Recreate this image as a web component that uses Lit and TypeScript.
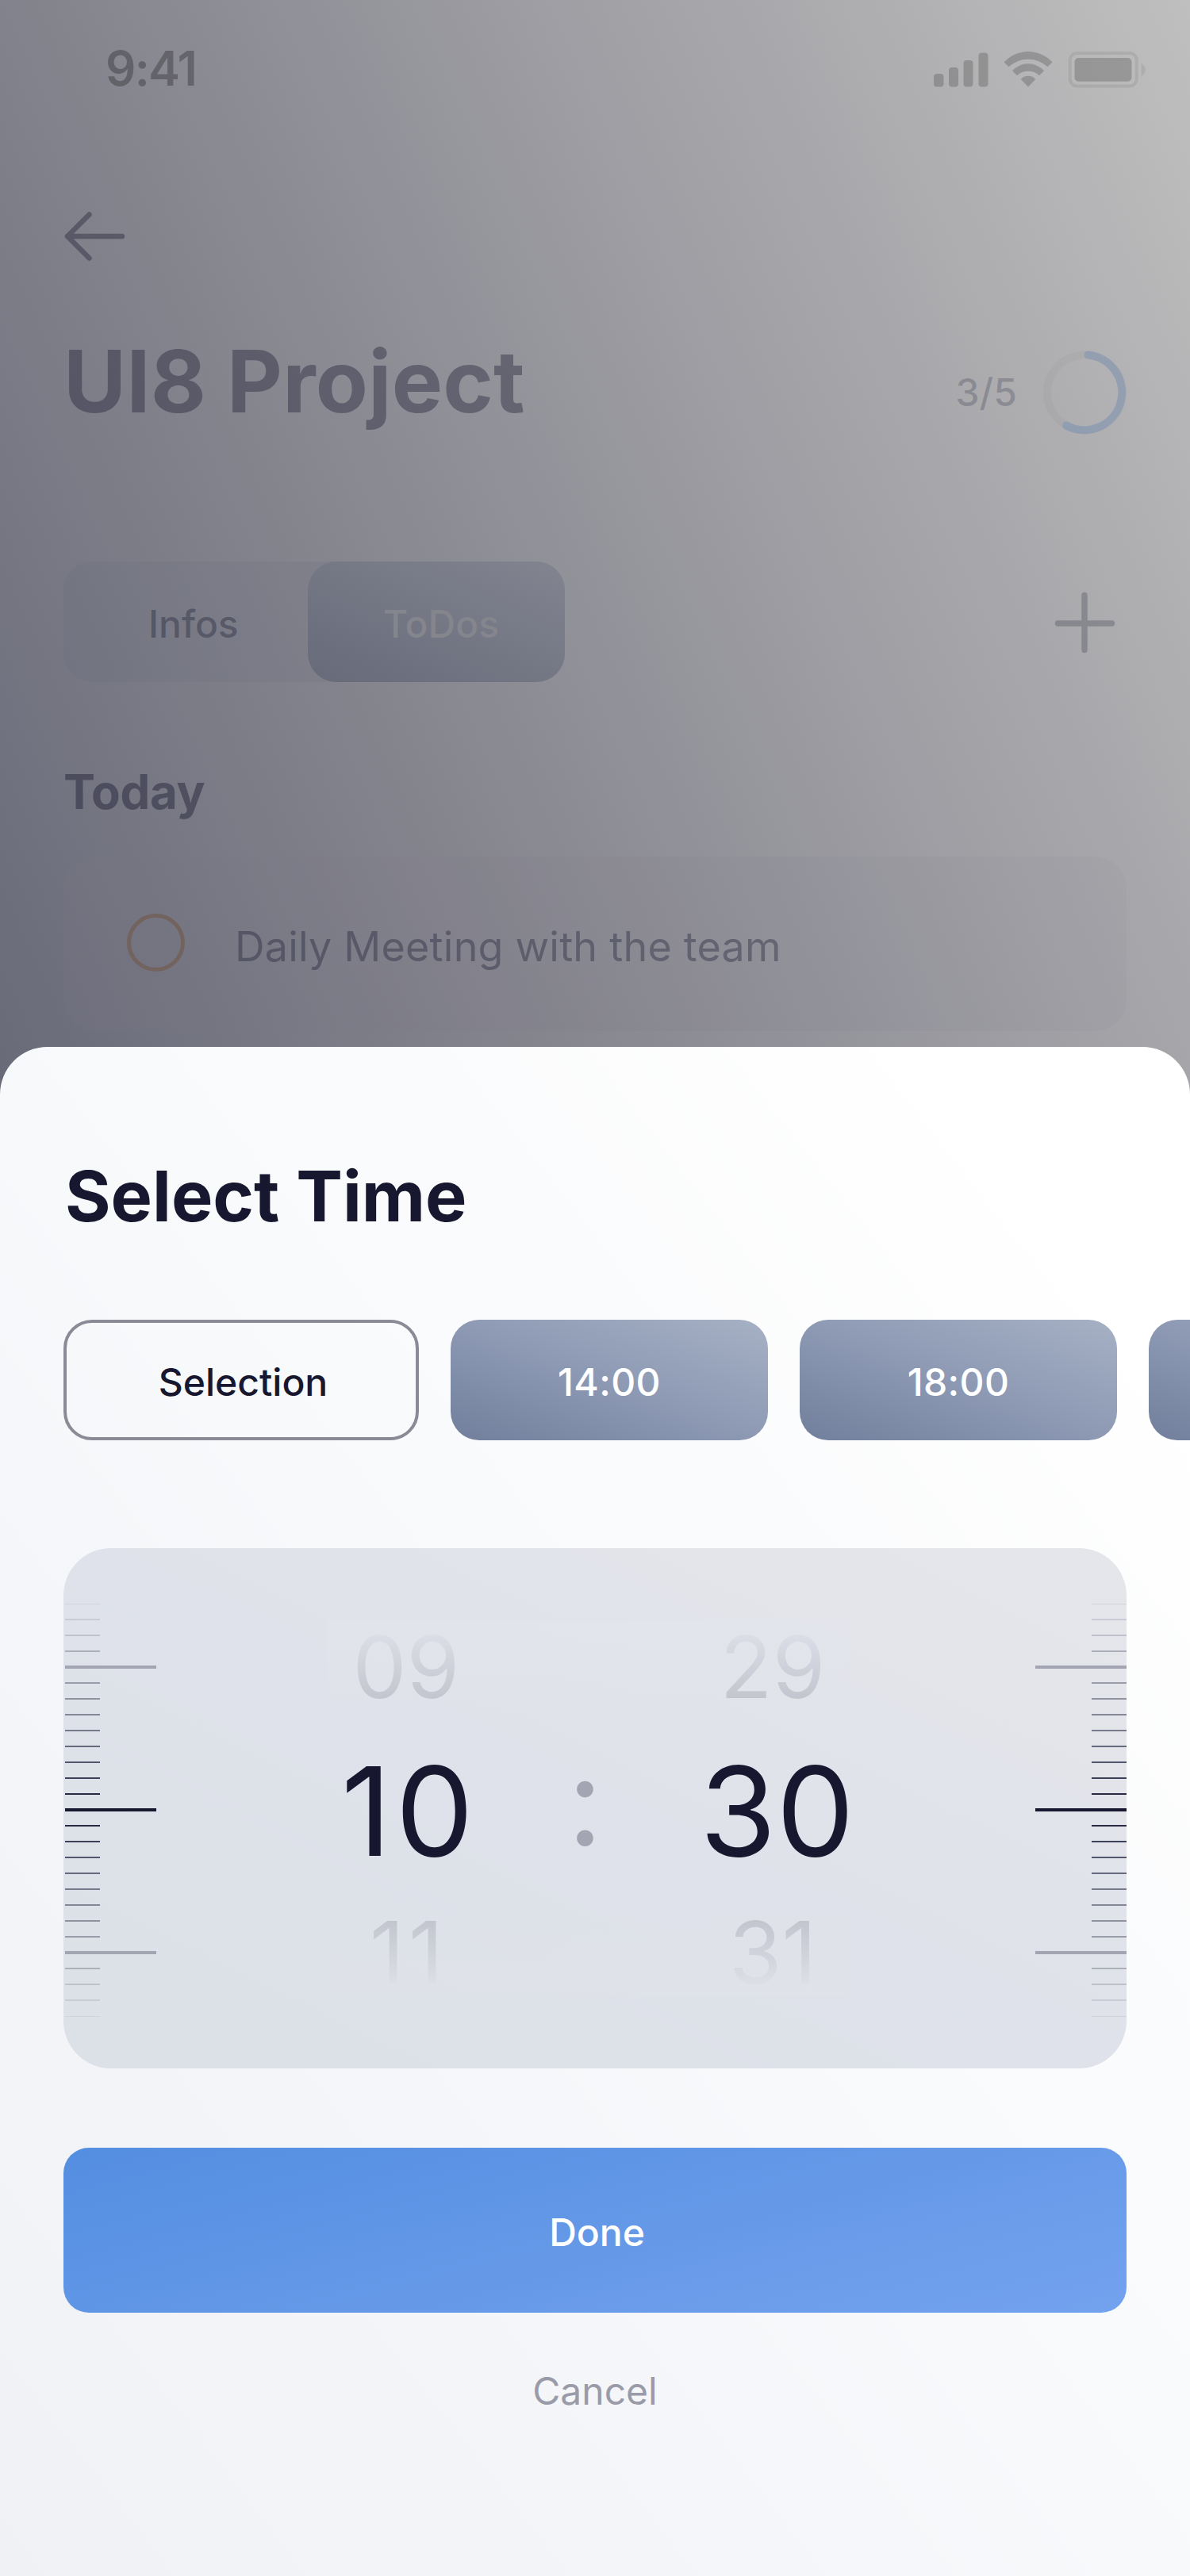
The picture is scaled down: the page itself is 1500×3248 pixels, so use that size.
import { LitElement, html, css, svg } from "lit";
import { customElement, property } from "lit/decorators.js";

const arrowIcon = svg`<path d="M154 298H85M112.500 270.500L85 298L112.500 325.500" transform="translate(-80 -264)"/>`;

@customElement("status-bar")
class StatusBar extends LitElement {
  static styles = css`
    :host { display: flex; justify-content: space-between; align-items: flex-start; height: 264px; box-sizing: border-box; padding: 50px 54px 0 133px; }
    .clock { font-size: 60px; line-height: 73px; font-weight: 600; color: rgba(0, 0, 0, 0.27); letter-spacing: -1.7px; }
    svg { display: block; margin-top: 13px; }
    .solid { fill: rgba(0, 0, 0, 0.185); }
    .faint { fill: rgba(0, 0, 0, 0.07); }
    .shell { fill: none; stroke: rgba(0, 0, 0, 0.07); stroke-width: 4; }
  `;
  render() {
    return html`
      <div class="clock">9:41</div>
      <svg width="270" height="50" viewBox="1176 63 270 50">
        <g class="solid">
          <rect x="1177" y="93" width="12.500" height="16.500" rx="4" />
          <rect x="1196" y="85" width="12" height="24.500" rx="4" />
          <rect x="1214.500" y="76" width="12" height="33.500" rx="4" />
          <rect x="1233.500" y="66.500" width="12" height="43" rx="4" />
          <path d="M1265.500 78.500A41.200 41.200 0 0 1 1326.500 78.500L1320.500 84.300A36 36 0 0 0 1271.500 84.300Z" />
          <path d="M1276 89.300A26.700 26.700 0 0 1 1316 89.300L1310 95.200A20.600 20.600 0 0 0 1282 95.200Z" />
          <path d="M1286.700 100A12.200 12.200 0 0 1 1305.300 100L1296 109.500Z" />
          <rect x="1354.500" y="73" width="72" height="29.700" rx="5" />
        </g>
        <rect class="shell" x="1348.700" y="67" width="84" height="41.500" rx="9" />
        <path class="faint" d="M1438.500 80C1445.500 83 1445.500 93 1438.500 96Z" />
      </svg>
    `;
  }
}

@customElement("project-screen")
class ProjectScreen extends LitElement {
  static styles = css`
    :host { display: block; height: 1320px; }
    .stroke { fill: none; stroke-linecap: round; stroke-linejoin: round; }
    .back { display: block; margin-left: 80px; stroke: rgba(23, 24, 47, 0.38); stroke-width: 6.500; }
    .heading { display: flex; align-items: flex-start; padding: 82px 80px 0 80px; height: 376px; box-sizing: border-box; }
    h1 { margin: 1px 0 0; font-size: 108px; line-height: 131px; font-weight: 700; letter-spacing: 0.2px; color: rgba(23, 24, 47, 0.38); }
    .count { margin: 52px 33px 0 auto; font-size: 48px; line-height: 58px; font-weight: 500; color: rgba(23, 24, 47, 0.22); }
    .ring { display: block; margin-top: 28px; }
    .track { fill: none; stroke: rgba(0, 0, 0, 0.025); stroke-width: 10; }
    .arc { fill: none; stroke: rgba(120, 145, 180, 0.48); stroke-width: 10; stroke-linecap: round; }
    .toolbar { display: flex; align-items: center; justify-content: space-between; padding: 0 93px 0 80px; }
    .tabs { display: flex; width: 632px; height: 152px; border-radius: 36px; background: rgba(95, 98, 118, 0.13); font-size: 48px; line-height: 58px; font-weight: 500; color: rgba(23, 24, 47, 0.36); }
    .tab { width: 308px; box-sizing: border-box; padding: 50px 0 0 107px; }
    .tab.active { width: 324px; border-radius: 36px; padding-left: 95px; background: linear-gradient(to top right, #676a79, #828490); color: #85858d; }
    .plus { stroke: rgba(23, 24, 47, 0.24); stroke-width: 7.500; }
    h2 { margin: 102px 80px 0; font-size: 60px; line-height: 73px; font-weight: 700; letter-spacing: -0.3px; color: rgba(23, 24, 47, 0.43); }
    .task { display: flex; margin: 45px 80px 0; height: 220px; border-radius: 40px; background: linear-gradient(90deg, rgba(122, 116, 132, 0.14), rgba(122, 118, 134, 0.08)); }
    .check { width: 73px; height: 73px; box-sizing: border-box; border: 5px solid #72635e; border-radius: 50%; margin: 72px 0 0 80px; }
    .label { margin: 82px 0 0 63px; font-size: 52px; line-height: 63px; letter-spacing: 0.22px; color: rgba(23, 24, 47, 0.36); }
  `;
  render() {
    return html`
      <status-bar></status-bar>
      <svg class="back stroke" width="80" height="68">${arrowIcon}</svg>
      <div class="heading">
        <h1>UI8 Project</h1>
        <div class="count">3/5</div>
        <svg class="ring" width="105" height="106" viewBox="0 0 105 106">
          <circle class="track" cx="52.500" cy="53" r="47.500" />
          <path class="arc" d="M56.500 5.500A47.500 47.500 0 1 1 29 94.500" />
        </svg>
      </div>
      <div class="toolbar">
        <div class="tabs">
          <div class="tab">Infos</div>
          <div class="tab active">ToDos</div>
        </div>
        <svg class="plus stroke" width="80" height="80"><path d="M40 6.500V75.500M6.500 42H74.500" /></svg>
      </div>
      <h2>Today</h2>
      <div class="task">
        <span class="check"></span>
        <span class="label">Daily Meeting with the team</span>
      </div>
    `;
  }
}

const TICK_COLORS = ["#d0d3dc", "#c9ccd6", "#bfc2cc", "#abafb9", "#a3a5b2", "#999ca9", "#8f93a0", "#838798", "#777a8c", "#666a7e", "#52566d", "#3d4059", "#2a2a44", "#17182f"];

@customElement("tick-scale")
class TickScale extends LitElement {
  @property({ type: Boolean, reflect: true }) mirrored = false;
  static styles = css`
    :host { display: flex; flex-direction: column; width: 115px; margin: 60px 0 0 2px; align-items: flex-start; }
    :host([mirrored]) { align-items: flex-end; margin-left: auto; }
    .slot { height: 20px; width: 44px; display: flex; align-items: center; }
    .slot.major { width: 115px; }
    .line { width: 100%; height: 2px; }
    .major .line { height: 4px; }
    .edge .line { height: 1px; }
  `;
  render() {
    return Array.from({ length: 27 }, (_, i) => {
      const kind = [4, 13, 22].includes(i) ? "major" : i % 26 === 0 ? "edge" : "";
      const color = TICK_COLORS[i <= 13 ? i : 26 - i];
      return html`<div class="slot ${kind}"><div class="line" style="background:${color}"></div></div>`;
    });
  }
}

@customElement("time-picker")
class TimePicker extends LitElement {
  static styles = css`
    :host { display: flex; height: 656px; margin: 136px 80px 0; border-radius: 60px; overflow: hidden; background: linear-gradient(to top right, #dce0e7, #dfe2ea 50%, #e5e6ea); }
    .wheel { display: grid; grid-template-columns: 200px 249px 206px; grid-template-rows: 116px 248px 108px; margin: 91px 0 0 216px; text-align: center; color: #17182f; }
    .wheel > * { display: flex; align-items: center; justify-content: center; box-sizing: border-box; }
    .side { font-size: 108px; color: transparent; background-clip: text, border-box; -webkit-background-clip: text, border-box; }
    .before { background-image: linear-gradient(to bottom, #dfe2ea 5%, #c1c3cd 90%), linear-gradient(to bottom, rgba(226, 229, 235, 0.6), rgba(224, 227, 235, 0.1)); }
    .after { background-image: linear-gradient(to top, #dfe2ea 5%, #c1c3cd 90%), linear-gradient(to top, rgba(224, 227, 232, 0.5), rgba(222, 225, 233, 0.1)); }
    .now { font-size: 156px; }
    .colon { font-size: 156px; color: #a3a5b2; padding-bottom: 26px; }
    .h09 { padding-right: 2px; }
    .h10 { padding-left: 6px; letter-spacing: 5px; }
    .h11 { padding-left: 4px; letter-spacing: 5px; }
    .m29, .m31 { padding-left: 18px; }
    .m30 { padding-left: 29px; }
  `;
  render() {
    return html`
      <tick-scale></tick-scale>
      <div class="wheel">
        <span class="side before h09">09</span><span class="side before"></span><span class="side before m29">29</span>
        <span class="now h10">10</span><span class="colon">:</span><span class="now m30">30</span>
        <span class="side after h11">11</span><span class="side after"></span><span class="side after m31">31</span>
      </div>
      <tick-scale mirrored></tick-scale>
    `;
  }
}

@customElement("app-root")
class AppRoot extends LitElement {
  static styles = css`
    :host { display: block; width: 1500px; height: 3248px; overflow: hidden; font-family: Inter, "Liberation Sans", sans-serif; background: linear-gradient(to top right, #464a5e, #82828c 50%, #bfbfbf); }
    .sheet { height: 1928px; box-sizing: border-box; overflow: hidden; padding-top: 135px; border-radius: 60px 60px 0 0; background: linear-gradient(to top right, #eff1f5, #f8f9fb 50%, #ffffff 90%); color: #17182f; }
    h1 { margin: 0 82px; font-size: 88px; line-height: 107px; font-weight: 700; }
    .chips { display: flex; gap: 40px; margin: 102px 0 0 80px; }
    .chip { flex: none; display: flex; align-items: center; justify-content: center; width: 400px; height: 152px; box-sizing: border-box; padding-top: 4px; border-radius: 36px; font-size: 48px; font-weight: 500; letter-spacing: 0.4px; color: #fff; background: linear-gradient(to top right, #717f9c, #8e9ab4 50%, #a6b1c5); }
    .chip.custom { width: 448px; border: 4px solid #8b8b97; background: none; color: #17182f; padding-left: 5px; letter-spacing: 0; }
    .done { display: flex; align-items: center; justify-content: center; height: 208px; box-sizing: border-box; margin: 100px 80px 0; padding: 4px 0 0 5px; border-radius: 32px; color: #fff; font-size: 48px; font-weight: 500; background: linear-gradient(165deg, #548ee0, #73a2ef); }
    .cancel { margin-top: 70px; text-align: center; font-size: 48px; line-height: 58px; color: #9a9ba8; }
  `;
  render() {
    return html`
      <project-screen></project-screen>
      <div class="sheet">
        <h1>Select Time</h1>
        <div class="chips">
          <div class="chip custom">Selection</div>
          <div class="chip">14:00</div>
          <div class="chip">18:00</div>
          <div class="chip"></div>
        </div>
        <time-picker></time-picker>
        <div class="done">Done</div>
        <div class="cancel">Cancel</div>
      </div>
    `;
  }
}
